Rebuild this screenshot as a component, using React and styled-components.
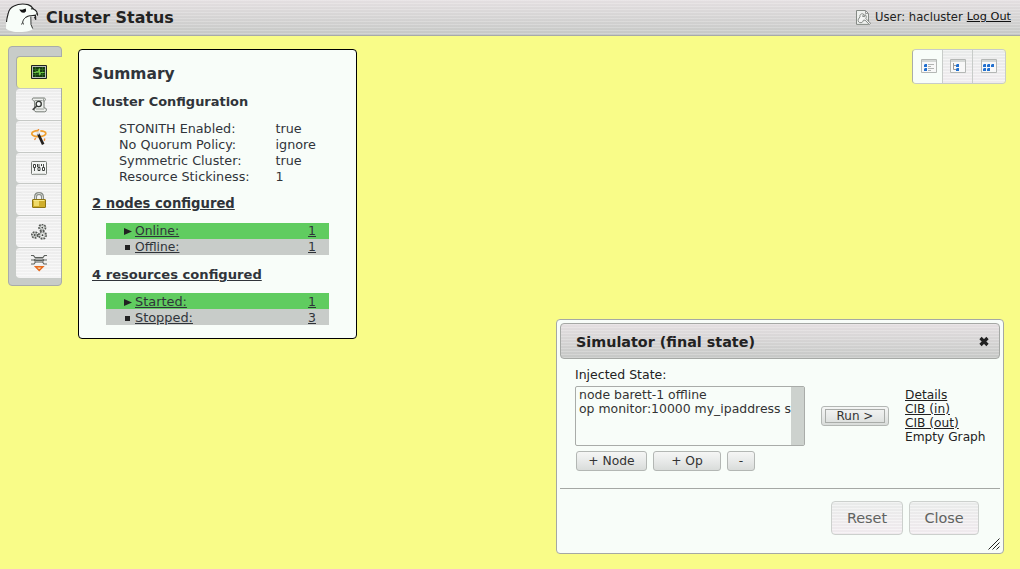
import React from "react";
import styled, { createGlobalStyle, css } from "styled-components";

const Global = createGlobalStyle`
  * { box-sizing: border-box; }
  body { margin: 0; background: #f9fc88; color: #30343a; overflow: hidden;
    font: 12.75px/16px "DejaVu Sans", Verdana, sans-serif; }
  svg { display: block; }
  button { font-family: inherit; color: inherit; margin: 0; padding: 0; }
`;
const stripes = (a, b, line = "rgba(255,255,255,.22)") => css`
  background: repeating-linear-gradient(to bottom, ${line} 0 1px, transparent 1px 3px),
    linear-gradient(to bottom, ${a}, ${b});
`;
const Page = styled.div`width: 1020px; height: 569px; position: relative; overflow: hidden;`;
const Header = styled.header`
  height: 36px; border-bottom: 1px solid #a8aaa8; padding: 0 9px 0 5px;
  display: flex; align-items: center; ${stripes("#e4dfe1", "#c6c8c6")}
`;
const AppTitle = styled.h1`margin: 0 auto 0 7px; font-size: 15.9px; line-height: 36px; color: #222; height: 35px;`;
const User = styled.div`
  display: flex; align-items: center; gap: 4px; font-size: 11.6px; color: #222; height: 35px; padding-bottom: 1px;
`;
const Link = styled.a`text-decoration: underline; text-underline-offset: 1px; color: ${p => p.$dark ? "#111" : "inherit"}; cursor: pointer;
  font-size: ${p => p.$size || "inherit"};`;
const Main = styled.main`display: flex; align-items: flex-start; padding: 10px 14px 0 8px;`;
const Rail = styled.nav`
  width: 54px; height: 240px; background: #c8ccc9; border: 1px solid #a9aca9; border-radius: 4px;
  padding: 9px 0 0 7px; display: flex; flex-direction: column;
`;
const Tab = styled.button`
  height: ${p => p.$h || 32}px; width: ${p => p.$active ? 46 : 45}px; border: 0;
  border-radius: 4px 0 0 4px; display: flex; align-items: center; justify-content: center;
  border-top: 1px solid #c6c9c6;
  ${p => p.$active ? css`background: #f9fc88; border-top-color: #a9aca9; border-left: 1px solid #a9aca9; padding: 0 1px 2px 0;`
    : stripes("#ececec", "#f3f3f3", "rgba(255,255,255,.5)")}
`;
const Summary = styled.section`
  width: 279px; height: 290px; margin: 3px auto 0 16px; padding: 12px 13px;
  border: 1px solid #000; border-radius: 4px; background: #f8fdf9;
`;
const Title = styled.h2`margin: 0; font-size: 15.5px; line-height: 24px; height: 30px;`;
const Sub = styled.h3`margin: 0; font-size: ${p => p.$size}px; line-height: 20px; height: ${p => p.$h}px;
  text-decoration: ${p => p.$link ? "underline" : "none"}; text-underline-offset: 1px;`;
const Config = styled.dl`
  margin: 0 0 9px 27px; display: grid; grid-template-columns: 156.5px auto; grid-auto-rows: 16px;
  dt, dd { margin: 0; white-space: nowrap; }
`;
const Counts = styled.div`margin: 0 0 ${p => p.$gap || 0}px 14px; width: 223px;`;
const CountRow = styled.div`
  height: 16px; display: flex; align-items: center; justify-content: space-between;
  padding: ${p => p.$drop || 0}px 13px 0 18px; background: ${p => p.$on ? "#60cc60" : "#c8ccc9"};
`;
const CountLabel = styled.span`display: flex; align-items: center; gap: 3px;`;
const Views = styled.div`
  margin-top: 3px; width: 94px; height: 35px; display: flex;
  border: 1px solid #c8ccc9; border-left-color: #a9aca9; border-radius: 4px; overflow: hidden;
`;
const View = styled.button`
  width: ${p => p.$w}px; border: 0; border-left: 1px solid #c8ccc9; padding: 0 0 2px ${p => p.$shift || 0}px;
  display: flex; align-items: center; justify-content: center;
  ${p => p.$active ? css`background: #f8fdf9; border-left: 0;` : stripes("#e9ebea", "#efebee", "rgba(255,255,255,.45)")}
`;
const Dialog = styled.section`
  position: absolute; left: 556px; top: 319px; width: 448px; height: 235px;
  background: #f8fdf9; border: 1px solid #a5a8a5; border-radius: 4px; padding: 3px;
  color: #222; font-size: 12.5px;
`;
const DialogBar = styled.div`
  height: 36px; border: 1px solid #a5a8a5; border-radius: 4px; padding: 0 9px 0 15px;
  display: flex; align-items: center; justify-content: space-between; ${stripes("#e4dfe1", "#c6c8c6")}
`;
const DialogTitle = styled.h2`margin: 0; font-size: 14.35px; line-height: 34px; padding-top: 1px;`;
const Body = styled.div`height: 129px; padding: 8px 0 0 15px; display: flex; align-items: flex-start;`;
const Inject = styled.div`width: 230px;`;
const Caption = styled.label`display: block; height: 19px; line-height: 16px;`;
const List = styled.div`
  height: 60px; border: 1px solid #a9aca9; border-radius: 2px; display: flex; background: #f8fdf9;
`;
const Lines = styled.div`flex: 1; min-width: 0; overflow: hidden; white-space: pre; padding: 1px 0 0 3px; line-height: 14px; color: #333; font-size: 12.45px;`;
const ScrollTrack = styled.div`width: 13px; background: #cdd2ce;`;
const Buttons = styled.div`display: flex; gap: 6px; padding: 5px 0 0 1px;`;
const Button = styled.button`
  width: ${p => p.$w}px; height: 20px; border: 1px solid #b3b7b4; border-radius: 3px;
  font-size: 12.3px; line-height: 17px; color: #333;
  background: linear-gradient(#f5f6f5, #e8eae9 50%, #d9dcda);
`;
const Run = styled(Button)`margin: 39px 16px 0; padding: 2px 3px;
  span { display: block; height: 14px; line-height: 13px; border: 1px solid #a9aca9; font-size: 12px; }`;
const Links = styled.div`display: flex; flex-direction: column; align-items: flex-start; line-height: 14px; padding-top: 21px; white-space: nowrap; font-size: 12.2px;`;
const Footer = styled.footer`
  border-top: 1px solid #a5a8a5; padding: 12px 21px 0; display: flex; justify-content: flex-end; gap: 6px;
`;
const BigButton = styled.button`
  height: 34px; width: ${p => p.$w}px; border: 1px solid #ccd0cd; border-radius: 4px; font-size: 14.4px; color: #606260;
  ${stripes("#e9ebea", "#f0eaee", "rgba(255,255,255,.45)")}
`;
const Grip = styled.svg`position: absolute; right: 3px; bottom: 3px;`;

const Icon = ({ children, w = 16, h = 16 }) => (
  <svg width={w} height={h} viewBox={`0 0 ${w} ${h}`} fill="none">{children}</svg>
);
const Bird = () => (
  <svg width="34" height="32" viewBox="0 0 34 32" fill="none">
    <path d="M1 26c.2-4 .1-8 1.5-11.5C3.2 10 4 7 7.2 5 11 2.5 18 1.8 23 2.6c2.6.7 4 2.2 5.3 4.3 2.8 1 4.2 3.2 4.4 6.4l-2.6 1.2-4 .6-.4 7.9 2 4.5-4 1.5c-6 1.7-18 1.8-22.7-2.5Z" fill="#f8fdf9" />
    <path d="M1.5 20c.2-3.5 1-6 1.7-8.5C4 7.5 5.5 5.5 9 4c4-2 10-2.2 14-1.4 2.6.7 4 2.2 5.3 4.3 2.8 1 4.2 3.2 4.4 6.6l-1.2-2.3" stroke="#222" strokeWidth="1.1" />
    <path d="M26 7.2c.8-.7 1.6-.7 2.6-.3M20.8 15.4c1.6-1.4 3.2-2 5.2-1.6l4.5-.6.3 4.6-1.4-3" stroke="#222" strokeWidth="1.1" />
    <path d="M21 15.2c-1.5 1-2.7 2.4-3 3.8-.3 1.3-.8 2.4-1.5 3.5M25.8 14.5l.2 8 1.7 4M18 20.5l.4 2" stroke="#3a3d3b" />
    <path d="m14.2 7.5 3 .2 3.6-1.3.3 2.8-1.8 1.5-2.5-.1-1.3-1.4Z" fill="#151515" />
  </svg>
);
const Monitor = () => (
  <Icon><path d="M.5 1.5h15v13H.5z" fill="#b9c0bc" stroke="#20251f" /><path d="M2 3h12v10H2z" fill="#153a10" />
    <path d="M2 5.5h12M2 10.5h12M4.5 3v10M11.5 3v10" stroke="#2d6b20" strokeWidth=".8" />
    <path d="M2.5 8.5H5l1-1 1 1 1.5-4v6.8l1.3-2.8h3.7" stroke="#6fc944" strokeWidth="1.1" /></Icon>
);
const History = () => (
  <Icon><path d="M2 1h11c2 0 1.7 3 0 3v7h1.5c1.5 1 1 3.8-.7 3.8H5c-1.6 0-2-2-1.4-3.3V4C1.5 4 .5 1.8 2 1Z" fill="#eef0ed" stroke="#777d77" />
    <path d="M4 3.5h7.5M5 12h8M12.5 1.5v3" stroke="#999e99" /><circle cx="7.7" cy="7" r="2.6" fill="#f8fbfa" stroke="#303330" strokeWidth="1.3" />
    <path d="m5.7 9-4 3.8" stroke="#444" strokeWidth="1.7" /></Icon>
);
const Wand = () => (
  <Icon><path d="M7.5 1.7C3.5 1.6.8 3.2.8 4.8.8 7 5 7.8 8.5 7.5c4-.3 6.5-1.5 6.3-3.2-.2-1.6-3-2.3-5.5-2.4" stroke="#f0a030" strokeWidth="1.7" />
    <path d="m7 4.5 5.2 10.8" stroke="#24201e" strokeWidth="2.7" /><path d="m6.4 3 1.2 2.4" stroke="#ddd" strokeWidth="2.2" />
    <path d="M7.5 0v1.5M4.8 9.3l-1.4 1.4M13.8 9.5l-.6 2.2" stroke="#ef8d37" strokeWidth="1.4" /></Icon>
);
const Sliders = () => (
  <Icon><rect x=".5" y="1.5" width="15" height="13" rx="1" fill="#f3f5f3" stroke="#747974" /><path d="M2 14h12" stroke="#bec3be" />
    <path d="M3.5 4v7M8 4v7M12.5 4v7" stroke="#4c504d" /><path d="M2.5 4.5h2v3h-2zM7 7.5h2v3H7zM11.5 7.5h2v3h-2zM6.5 4v3M10.5 4v2" fill="#fff" stroke="#3c403d" /></Icon>
);
const Lock = () => (
  <Icon><path d="M4.5 8V5c0-2.2 1.5-3.5 3.5-3.5s3.5 1.3 3.5 3.5v3" stroke="#888d87" strokeWidth="3" /><path d="M4.5 8V5c0-2.2 1.5-3.5 3.5-3.5s3.5 1.3 3.5 3.5v3" stroke="#d7dad6" />
    <rect x="1.5" y="7.5" width="13" height="8" rx=".5" fill="#d0ae2b" stroke="#8d7514" /><path d="M2.5 8.5h11" stroke="#f7e98a" /><path d="M3 9h5v5H3z" fill="#efda68" /></Icon>
);
const Gear = ({ x, y, r }) => <g transform={`translate(${x} ${y})`}>
  <circle r={r} fill="#eee" stroke="#555955" strokeWidth="1.8" strokeDasharray="1.8 1" /><circle r={r - 1} fill="#eceeec" stroke="#969b96" strokeWidth=".7" /><circle r=".9" fill="#3b3e3b" /></g>;
const Gears = () => <Icon><Gear x={11.3} y={3.6} r={3.2} /><Gear x={3.8} y={11} r={2.9} /><Gear x={11.5} y={11.2} r={3.6} /></Icon>;
const Tools = () => (
  <Icon h={18}><path d="M0 1.5h2.5l1.5 2h8l1.5-2H16M0 6h3l1.5-1h7L13 6h3M0 10h3l1.5-2h7L13 10h3M3 7l2-.5h6l2 .5" stroke="#5c605c" strokeWidth="1.2" />
    <path d="M4.5 12.7h7.5L8.2 16.5Z" fill="#f9d8a7" stroke="#e66b20" strokeWidth="1.4" /></Icon>
);
const UserIcon = () => (
  <Icon w={15} h={17}><path d="M.5 1.5h9l3 3v10.9H.5Z" fill="#eef0ee" stroke="#858a85" /><path d="M9.5 1.5v3h3" stroke="#999" />
    <path d="M7.6 5.2C5.5 4 3.4 5.6 4 7.8l-1.6 2.4c-.9 2 .6 3.8 2.6 3.5 1.4-.2 2.2-1.2 2.3-2.4l1.8-.2 4.2 4.4 1.3-1.1-4.7-4.8c.8-1.8.2-3.4-1-4.1l-.4 2.2-1.9-.3Z" fill="#f4f5f4" stroke="#787d78" strokeWidth=".9" /></Icon>
);
const viewArt = [
  <g key="0"><path d="M3 6h3v3H3zM3 10h3v3H3z" fill="#2370ce" /><path d="M3 6h1v1H3zM3 10h1v1H3z" fill="#7db4f0" /><path d="M7 6.5h6M7 8.5h3M7 10.5h6M7 12.5h3" stroke="#b2b4b2" /></g>,
  <g key="1"><path d="M3.5 5v6.5H6M3.5 7.5H6" stroke="#999" /><path d="M6 6h3v3H6zM6 10h3v3H6z" fill="#2370ce" /><path d="M6 6h1v1H6zM6 10h1v1H6z" fill="#7db4f0" /></g>,
  <g key="2"><path d="M2 6h3v3H2zM6 6h3v3H6zM10 6h3v3h-3zM2 10h3v3H2zM6 10h3v3H6z" fill="#2370ce" /><path d="M2 6h1v1H2zM6 6h1v1H6zM10 6h1v1h-1zM2 10h1v1H2zM6 10h1v1H6z" fill="#7db4f0" /></g>,
];
const ViewIcon = ({ n }) => <Icon><path d="M.5 1.5h15v13H.5z" fill="#f8f8f8" stroke="#b4b7b5" /><path d="M1 2h14v2H1z" fill="#d5d8d6" />{viewArt[n]}</Icon>;
const Marker = ({ on }) => <Icon w={8} h={9}><path d={on ? "M0 1v7l8-3.5Z" : "M1 2h5v5H1z"} fill="#222" /></Icon>;
const Count = ({ on, label, value, size, drop }) => (
  <CountRow $on={on} $drop={drop}><CountLabel><Marker on={on} /><Link $size={size}>{label}</Link></CountLabel><Link $size="12.5px">{value}</Link></CountRow>
);

const settings = [["STONITH Enabled:", "true"], ["No Quorum Policy:", "ignore"], ["Symmetric Cluster:", "true"], ["Resource Stickiness:", "1"]];
const tabs = [Monitor, History, Wand, Sliders, Lock, Gears, Tools];
const views = [{ w: 29, shift: 2 }, { w: 30, shift: 1 }, { w: 33, shift: 0 }];

export default function App() {
  return (
    <Page>
      <Global />
      <Header>
        <Bird /><AppTitle>Cluster Status</AppTitle>
        <User><UserIcon /><span>User: hacluster</span><Link $dark $size="11.3px">Log Out</Link></User>
      </Header>
      <Main>
        <Rail>{tabs.map((Art, i) => <Tab key={i} $active={i === 0} $h={i === 6 ? 31 : i === 3 ? 31 : 32}><Art /></Tab>)}</Rail>
        <Summary>
          <Title>Summary</Title>
          <Sub $size={12.95} $h={29}>Cluster Configuration</Sub>
          <Config>{settings.map(([k, v]) => <React.Fragment key={k}><dt>{k}</dt><dd>{v}</dd></React.Fragment>)}</Config>
          <Sub $size={13.2} $h={29} $link>2 nodes configured</Sub>
          <Counts $gap={10}><Count on label="Online:" value="1" size="12.4px" /><Count label="Offline:" value="1" size="12.3px" /></Counts>
          <Sub $size={13.1} $h={28} $link>4 resources configured</Sub>
          <Counts><Count on drop={2} label="Started:" value="1" size="12.9px" /><Count drop={2} label="Stopped:" value="3" size="12.9px" /></Counts>
        </Summary>
        <Views>{views.map((v, i) => <View key={i} $w={v.w} $shift={v.shift} $active={i === 0}><ViewIcon n={i} /></View>)}</Views>
      </Main>
      <Dialog>
        <DialogBar><DialogTitle>Simulator (final state)</DialogTitle>
          <Icon w={12} h={12}><path d="m2.5 3 7 7m0-7-7 7" stroke="#222" strokeWidth="3.2" /></Icon></DialogBar>
        <Body>
          <Inject>
            <Caption>Injected State:</Caption>
            <List><Lines>{"node barett-1 offline\nop monitor:10000 my_ipaddress s"}</Lines><ScrollTrack /></List>
            <Buttons><Button $w={71}>+ Node</Button><Button $w={68}>+ Op</Button><Button $w={28}>-</Button></Buttons>
          </Inject>
          <Run $w={68}><span>Run &gt;</span></Run>
          <Links><Link>Details</Link><Link>CIB (in)</Link><Link>CIB (out)</Link><span>Empty Graph</span></Links>
        </Body>
        <Footer><BigButton $w={72}>Reset</BigButton><BigButton $w={70}>Close</BigButton></Footer>
        <Grip width="12" height="12" viewBox="0 0 12 12"><path d="M.5 11.5l11-11M4.5 11.5l7-7M8.5 11.5l3-3" stroke="#222" /></Grip>
      </Dialog>
    </Page>
  );
}
